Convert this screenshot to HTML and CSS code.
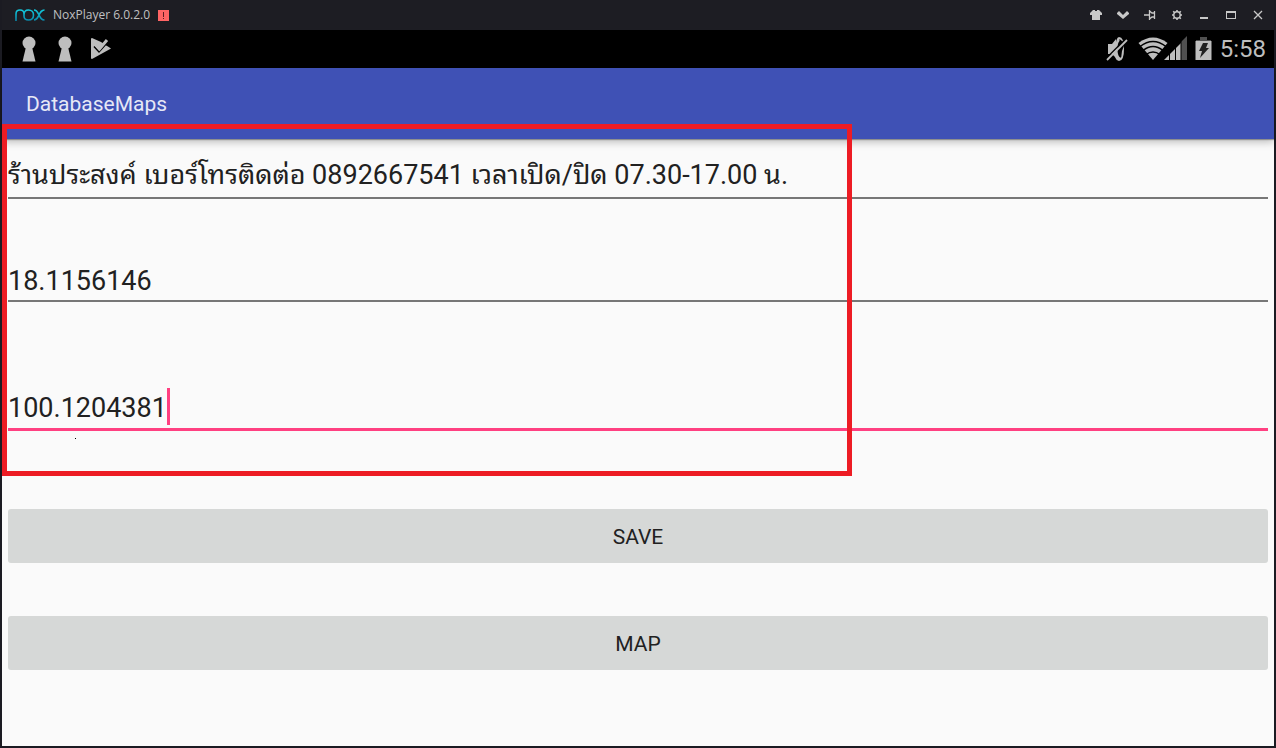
FILE: index.html
```html
<!DOCTYPE html>
<html lang="th">
<head>
    <meta charset="UTF-8">
    <meta name="viewport" content="width=device-width, initial-scale=1.0">
    <title>NoxPlayer 6.0.2.0</title>
    <link rel="stylesheet" href="styles.css">
</head>
<body>
    <div class="player">
        <!-- Window title bar -->
        <header class="titlebar">
            <svg class="logo" width="30" height="12" viewBox="0 0 30 12" fill="none" stroke-width="1.600">
                <defs>
                    <linearGradient id="nox" x1="0" y1="0" x2="0" y2="1">
                        <stop offset="0" stop-color="#12c8dc"/>
                        <stop offset="1" stop-color="#0a86a8"/>
                    </linearGradient>
                </defs>
                <path stroke="url(#nox)" d="M1 12V5C1 2 2.500 1 5 1s4 1 4 4v2c0 3 1.500 4 4.500 4s5-2 5-5-2-5-5-5S9 3 9 6M19 1c3 0 3.500 2 5 5s2.500 5 5.500 5M19 11c3 0 3.500-2 5-5s2.500-5 5.500-5"/>
            </svg>
            <span class="window-name">NoxPlayer 6.0.2.0</span>
            <svg class="alert" width="11" height="11" viewBox="0 0 11 11">
                <path fill="#ff6464" d="M0 0h11v11H0z"/>
                <path fill="#5c1c22" d="M5 2h1v5H5zM5 8h1v1H5z"/>
            </svg>
            <div class="window-controls">
                <button type="button" aria-label="Theme">
                    <svg width="12" height="12" viewBox="0 0 12 12" fill="#c8c8c8"><path d="M3 1h2v1h2V1h2l3 3v2h-2v5H2V6H0V4z"/></svg>
                </button>
                <button type="button" aria-label="More">
                    <svg width="12" height="12" viewBox="0 0 12 12" fill="#c8c8c8"><path d="M0 4l2-2 4 4 4-4 2 2v1l-6 5-6-5z"/></svg>
                </button>
                <button type="button" aria-label="Pin">
                    <svg width="12" height="12" viewBox="0 0 12 12" fill="none" stroke="#c8c8c8" stroke-width="1.300"><path d="M0 6h5M5.500 1v10M5.500 2l2.500 2H11M5.500 10l2.500-2H11M10.500 2v8"/></svg>
                </button>
                <button type="button" aria-label="Settings">
                    <svg width="12" height="12" viewBox="0 0 12 12" fill="none" stroke="#c8c8c8"><circle cx="6" cy="6" r="3.200" stroke-width="1.400"/><path stroke-width="1.600" d="M6 1v2M6 9v2M1 6h2M9 6h2M2.200 2.200l1.500 1.500M8.300 8.300l1.500 1.500M9.800 2.200L8.300 3.700M3.700 8.300L2.200 9.800"/></svg>
                </button>
                <button type="button" aria-label="Minimize">
                    <svg width="12" height="12" viewBox="0 0 12 12" fill="#c8c8c8"><path d="M2 8h8v2H2z"/></svg>
                </button>
                <button type="button" aria-label="Maximize">
                    <svg width="12" height="12" viewBox="0 0 12 12" fill="#c8c8c8"><path fill-rule="evenodd" d="M1 2h10v8H1zM2 4v5h8V4z"/></svg>
                </button>
                <button type="button" aria-label="Close">
                    <svg width="12" height="12" viewBox="0 0 12 12" stroke="#c8c8c8" stroke-width="1.300"><path d="M2 2l8 8M10 2l-8 8"/></svg>
                </button>
            </div>
        </header>

        <!-- Android status bar -->
        <div class="statusbar">
            <div class="notifications">
                <svg width="14" height="26" viewBox="0 0 14 26" fill="#bebebe"><circle cx="7" cy="7" r="6.500"/><path d="M4 11h6l3.500 14.500H.5z"/></svg>
                <svg width="14" height="26" viewBox="0 0 14 26" fill="#bebebe"><circle cx="7" cy="7" r="6.500"/><path d="M4 11h6l3.500 14.500H.5z"/></svg>
                <svg class="play" width="20" height="26" viewBox="0 0 20 26"><path fill="#bebebe" d="M0 3q0-1 1-1l9 4 10 6.500L1 23q-1 0-1-1z"/><path fill="#000" d="M10 0h10v9l-4 1z"/><path fill="none" stroke="#000" stroke-width="1.500" d="M3 10.500l5 5.500 8-9"/><path fill="none" stroke="#bebebe" stroke-width="3" d="M4 8l4.500 5L16 4"/></svg>
            </div>
            <div class="system">
                <svg width="22" height="26" viewBox="0 0 22 26"><path fill="#bebebe" d="M2 8h4l4-5v19l-4-4H2z"/><path fill="#bebebe" fill-rule="evenodd" d="M13 1q5 0 5 12t-5 12-4-12 4-12zM13.500 5q-2 2-2 8t2 8 2-2 2-8-4-8z"/><path stroke="#000" stroke-width="1.500" d="M0 22.500L20 2.500"/><path stroke="#bebebe" stroke-width="1.800" d="M1 24L21 4"/></svg>
                <svg class="network" width="49" height="26" viewBox="0 0 49 26">
                    <path fill="#bebebe" d="M.5 7Q15 -4 29.500 7L15 24z"/>
                    <path fill="none" stroke="#000" stroke-width="1.500" d="M2 10.500q13-10 26 0M5 14.500q10-8 20 0M8 18.500q7-5 14 0"/>
                    <path fill="#bebebe" d="M26 24l17-17v17z"/>
                    <path fill="#505050" d="M43 6l6-6v24h-6z"/>
                    <path stroke="#000" d="M31.500 14v10M37.500 8v16M43 4v20"/>
                </svg>
                <svg width="17" height="26" viewBox="0 0 17 26"><path fill="#505050" d="M5 1h7v3h4v2H1V4h4z"/><path fill="#bebebe" d="M.5 5h16v19H.5z"/><path fill="#222" d="M8 7h5l-2 5h3L5 22l2-7H4z"/></svg>
                <span class="clock">5:58</span>
            </div>
        </div>

        <!-- App -->
        <div class="appbar"><h1>DatabaseMaps</h1></div>
        <main class="screen">
            <form class="place-form">
                <div class="field name">
                    <input type="text" aria-label="Name" value="ร้านประสงค์ เบอร์โทรติดต่อ 0892667541 เวลาเปิด/ปิด 07.30-17.00 น.">
                </div>
                <div class="field latitude">
                    <input type="text" aria-label="Latitude" value="18.1156146">
                </div>
                <div class="field longitude active">
                    <input type="text" aria-label="Longitude" value="100.1204381">
                    <span class="cursor"></span>
                </div>
                <button class="action" type="button">SAVE</button>
                <button class="action" type="button">MAP</button>
            </form>
            <div class="highlight"><span class="speck"></span></div>
        </main>
    </div>
</body>
</html>
```
FILE: styles.css
```css
/* General Styles */
* {
    box-sizing: border-box;
}

body {
    margin: 0;
    font-family: Roboto, "Noto Sans Thai Looped", "Noto Looped Thai", Loma, Garuda, Waree, "Droid Sans Thai", "Noto Sans", sans-serif;
    background-color: #1b1b22;
}

svg {
    display: block;
    flex-shrink: 0;
}

.player {
    display: flex;
    flex-direction: column;
    min-height: 100vh;
    border: solid #1b1b22;
    border-width: 0 2px 2px;
}

/* Title bar */
.titlebar {
    display: flex;
    align-items: center;
    height: 30px;
    padding: 0 3px 0 13px;
    background-color: #1d1d23;
}

.window-name {
    margin: 0 8px;
    font-family: "Open Sans", sans-serif;
    font-size: 12px;
    line-height: 18px;
    color: #c0c0c2;
}

.window-controls {
    display: flex;
    margin-left: auto;
}

.window-controls button {
    display: flex;
    align-items: center;
    justify-content: center;
    width: 27px;
    height: 30px;
    padding: 0;
    border: none;
    background: none;
}

/* Status bar */
.statusbar {
    display: flex;
    align-items: center;
    justify-content: space-between;
    height: 38px;
    padding: 0 8px 0 20px;
    background-color: #000;
}

.notifications {
    display: flex;
    gap: 22px;
}

.play {
    margin-left: -3px;
}

.system {
    display: flex;
    align-items: center;
    gap: 8px;
}

.network {
    margin-left: 2px;
}

.clock {
    font-size: 24px;
    line-height: 40px;
    color: #bebebe;
}

/* App bar */
.appbar {
    position: relative;
    display: flex;
    align-items: center;
    height: 71px;
    padding: 0 24px;
    background-color: #3f51b5;
    box-shadow: 0 1px 1px rgba(0, 0, 0, 0.3), 0 3px 8px rgba(0, 0, 0, 0.25);
    z-index: 1;
}

.appbar h1 {
    margin: 0;
    font-size: 21px;
    font-weight: 400;
    color: #e6e8f6;
}

/* Form */
.screen {
    position: relative;
    flex: 1;
    background-color: #fafafa;
}

.place-form {
    display: flex;
    flex-direction: column;
    padding: 17px 6px;
}

.field {
    display: flex;
    height: 43px;
    border-bottom: 2px solid #777;
}

.field input {
    width: 100%;
    height: 37px;
    padding: 2px 0 0;
    border: none;
    outline: none;
    background: none;
    font-family: inherit;
    font-size: 27px;
    color: #212121;
}

/* Thai marks stand high, so this line takes the full field */
.name {
    height: 49px;
    margin-top: -6px;
}

.name input {
    height: 41px;
}

.latitude {
    height: 41px;
    margin-top: 62px;
}

.longitude {
    margin-top: 86px;
}

.active {
    border-bottom: 3px solid #ff4081;
}

.active input {
    width: auto;
    field-sizing: content;
}

.cursor {
    width: 3px;
    height: 37px;
    background-color: #ff4081;
}

.action {
    height: 54px;
    padding-top: 2px;
    margin-top: 53px;
    border: none;
    border-radius: 3px;
    background-color: #d6d8d7;
    font-family: inherit;
    font-size: 21px;
    color: #212121;
}

.longitude + .action {
    margin-top: 78px;
}

/* Red frame over the fields */
.highlight {
    position: absolute;
    top: -15px;
    left: 0;
    width: 850px;
    height: 352px;
    border: 5px solid #ed1c24;
    pointer-events: none;
    z-index: 2;
}

.speck {
    position: absolute;
    top: 309px;
    left: 68px;
    width: 1px;
    height: 1px;
    background-color: #000;
}
```
